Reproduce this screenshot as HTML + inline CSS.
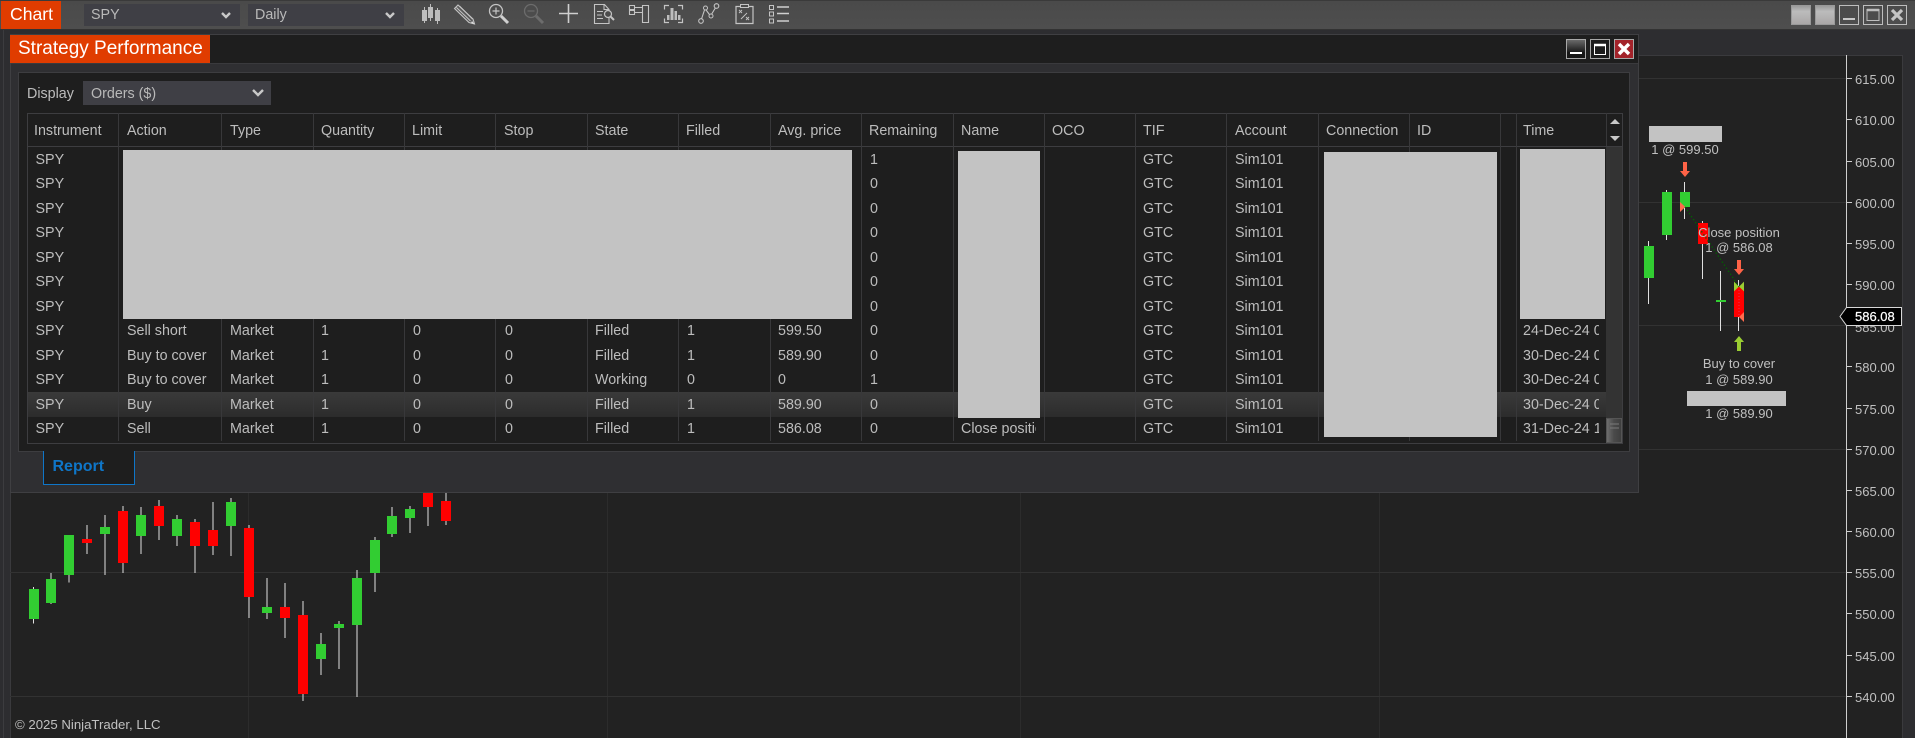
<!DOCTYPE html>
<html><head><meta charset="utf-8"><title>Strategy Performance</title>
<style>
html,body{margin:0;padding:0;width:1915px;height:738px;overflow:hidden;background:#2d2d30;font-family:"Liberation Sans",Arial,sans-serif}
div,span{position:absolute;box-sizing:border-box}
#tb{left:0;top:0;width:1915px;height:30px;background:linear-gradient(#4a4a4a,#4e4e4e);border-top:1px solid #3a3a3a;border-bottom:1px solid #333}
.org{background:#e03c00;color:#fff;white-space:nowrap}
.cb{background:#3f3f45;color:#b9b9b9;font-size:14.3px;line-height:24px;padding-left:7px}
svg{position:absolute;left:0;top:0}
#win{left:10px;top:34px;width:1629px;height:459px;background:#2f2f32;border:1px solid #3f3f42}
#hdr{left:0;top:0;width:1627px;height:29px;background:#1e1e1e;border-bottom:1px solid #3a3a3d}
#panel{left:18px;top:72px;width:1612px;height:380px;background:#1e1e1e;border:1px solid #3d3d40}
.t{font-size:14.3px;color:#bdbdbd;white-space:nowrap;line-height:20px}
.v{width:1px;top:113px;height:328px;background:#38383a}
.b{background:#c3c3c3}
.r{left:27px;width:1579px;height:24.45px}
.r span{top:3px;font-size:14.3px;color:#bdbdbd;white-space:nowrap;line-height:20px}
.a{left:8.5px}.c{left:100px}.d{left:203px}.e{left:294px}.f{left:386px}.g{left:478px}.h{left:568px}.i{left:660px}.j{left:751px}.k{left:843px}.l{left:934px}.m{left:1116px}.n{left:1208px}
.p{left:1496px;width:76px;overflow:hidden}
</style></head><body>

<!-- chart layer -->
<svg width="1915" height="738" viewBox="0 0 1915 738" style="top:0">
<rect x="10" y="55" width="1893" height="683" fill="#222222"/>
<rect x="10.5" y="55.5" width="1892" height="683" fill="none" stroke="#3a3a3d"/>
<rect x="3" y="30" width="1" height="708" fill="#3c3c3f"/>
<g shape-rendering="crispEdges">
<g fill="#2c2c2c"><rect x="248" y="55" width="1" height="683"/><rect x="607" y="55" width="1" height="683"/><rect x="1020" y="55" width="1" height="683"/><rect x="1379" y="55" width="1" height="683"/></g>
<g fill="#323232"><rect x="10" y="78" width="1837" height="1"/><rect x="10" y="202" width="1837" height="1"/><rect x="10" y="325" width="1837" height="1"/><rect x="10" y="449" width="1837" height="1"/><rect x="10" y="572" width="1837" height="1"/><rect x="10" y="696" width="1837" height="1"/></g>
<rect x="1846" y="55" width="1" height="683" fill="#cfcfcf"/>
<g fill="#cfcfcf"><rect x="1847" y="78" width="5" height="1"/><rect x="1847" y="119" width="5" height="1"/><rect x="1847" y="161" width="5" height="1"/><rect x="1847" y="202" width="5" height="1"/><rect x="1847" y="243" width="5" height="1"/><rect x="1847" y="284" width="5" height="1"/><rect x="1847" y="325" width="5" height="1"/><rect x="1847" y="366" width="5" height="1"/><rect x="1847" y="408" width="5" height="1"/><rect x="1847" y="449" width="5" height="1"/><rect x="1847" y="490" width="5" height="1"/><rect x="1847" y="531" width="5" height="1"/><rect x="1847" y="572" width="5" height="1"/><rect x="1847" y="613" width="5" height="1"/><rect x="1847" y="655" width="5" height="1"/><rect x="1847" y="696" width="5" height="1"/></g>
</g>
<g font-family="'Liberation Sans',Arial,sans-serif" font-size="13" fill="#c0c0c0">
<text x="1855" y="84">615.00</text><text x="1855" y="125">610.00</text><text x="1855" y="167">605.00</text><text x="1855" y="208">600.00</text><text x="1855" y="249">595.00</text><text x="1855" y="290">590.00</text><text x="1855" y="332">585.00</text><text x="1855" y="372">580.00</text><text x="1855" y="414">575.00</text><text x="1855" y="455">570.00</text><text x="1855" y="496">565.00</text><text x="1855" y="537">560.00</text><text x="1855" y="578">555.00</text><text x="1855" y="619">550.00</text><text x="1855" y="661">545.00</text><text x="1855" y="702">540.00</text>
</g>
<polygon points="1840,316.5 1846.5,307.5 1901.5,307.5 1901.5,325.5 1846.5,325.5" fill="#000" stroke="#d8d8d8"/>
<text x="1855" y="321" font-family="'Liberation Sans',Arial,sans-serif" font-size="13" fill="#fff" stroke="#fff" stroke-width=".2">586.08</text>

<!-- left candles: zoom units -->
<g transform="translate(0,470) scale(.33333)" shape-rendering="crispEdges">
<g fill="#e0e0e0">
<rect x="99" y="351" width="3" height="110"/><rect x="151" y="309" width="3" height="93"/><rect x="205" y="195" width="3" height="143"/><rect x="259" y="165" width="3" height="87"/><rect x="313" y="135" width="3" height="180"/><rect x="367" y="108" width="3" height="201"/><rect x="421" y="111" width="3" height="141"/><rect x="475" y="90" width="3" height="120"/><rect x="529" y="135" width="3" height="93"/><rect x="583" y="147" width="3" height="162"/><rect x="637" y="96" width="3" height="159"/><rect x="691" y="84" width="3" height="174"/><rect x="745" y="165" width="3" height="279"/><rect x="799" y="324" width="3" height="123"/><rect x="853" y="339" width="3" height="165"/><rect x="907" y="393" width="3" height="300"/><rect x="961" y="489" width="3" height="126"/><rect x="1015" y="453" width="3" height="144"/><rect x="1069" y="300" width="3" height="381"/><rect x="1123" y="201" width="3" height="165"/><rect x="1174" y="111" width="3" height="90"/><rect x="1228" y="108" width="3" height="81"/><rect x="1282" y="66" width="3" height="102"/><rect x="1336" y="66" width="3" height="99"/>
</g>
<g fill="#32cd32">
<rect x="87" y="357" width="30" height="90"/><rect x="138" y="327" width="30" height="72"/><rect x="192" y="195" width="30" height="120"/><rect x="300" y="171" width="30" height="21"/><rect x="408" y="135" width="30" height="63"/><rect x="516" y="147" width="30" height="51"/><rect x="678" y="96" width="30" height="72"/><rect x="786" y="411" width="30" height="18"/><rect x="948" y="522" width="30" height="45"/><rect x="1002" y="462" width="30" height="12"/><rect x="1056" y="324" width="30" height="141"/><rect x="1110" y="210" width="30" height="99"/><rect x="1161" y="138" width="30" height="54"/><rect x="1215" y="117" width="30" height="27"/>
</g>
<g fill="#ff0000">
<rect x="246" y="207" width="30" height="12"/><rect x="354" y="123" width="30" height="156"/><rect x="462" y="108" width="30" height="60"/><rect x="570" y="156" width="30" height="72"/><rect x="624" y="180" width="30" height="48"/><rect x="732" y="174" width="30" height="207"/><rect x="840" y="411" width="30" height="33"/><rect x="894" y="435" width="30" height="237"/><rect x="1269" y="66" width="30" height="45"/><rect x="1323" y="93" width="30" height="60"/>
</g>
</g>

<!-- right candles: zoom units -->
<g transform="translate(1500,180) scale(.33333)">
<g shape-rendering="crispEdges">
<g fill="#e0e0e0"><rect x="444" y="183" width="3" height="189"/><rect x="498" y="30" width="3" height="150"/><rect x="552" y="6" width="3" height="111"/><rect x="606" y="123" width="3" height="174"/><rect x="660" y="273" width="3" height="180"/><rect x="714" y="300" width="3" height="153"/></g>
<g fill="#32cd32"><rect x="432" y="198" width="30" height="96"/><rect x="486" y="36" width="30" height="129"/><rect x="540" y="36" width="30" height="45"/><rect x="648" y="360" width="30" height="6"/></g>
<g fill="#ff0000"><rect x="594" y="129" width="30" height="63"/><rect x="702" y="320" width="30" height="91"/></g>
</g>
<polygon points="540,66 556,81 540,96" fill="#ff6a4d"/>
<polygon points="702,305 717,320 702,334" fill="#9acd32"/>
<polygon points="732,305 717,320 732,334" fill="#9acd32"/>
<polygon points="732,396 717,411 732,426" fill="#ff6a4d"/>
<line x1="555" y1="81" x2="717" y2="320" stroke="#006400" stroke-width="4" stroke-dasharray="4 7"/>
<line x1="717" y1="330" x2="717" y2="408" stroke="#e0305a" stroke-width="3" stroke-dasharray="3 6"/>
<polygon points="711,240 723,240 723,267 732,267 717,285 702,267 711,267" fill="#ff6347"/>
<polygon points="711,513 723,513 723,486 732,486 717,468 702,486 711,486" fill="#9acd32"/>
</g>
<polygon points="1683,162 1687,162 1687,171 1690,171 1685,177 1680,171 1683,171" fill="#ff6347"/>
<rect x="1649" y="126" width="73" height="16" fill="#c3c3c3"/>
<rect x="1687" y="391" width="99" height="15" fill="#c3c3c3"/>
<g font-family="'Liberation Sans',Arial,sans-serif" font-size="13" fill="#c0c0c0" text-anchor="middle">
<text x="1685" y="154">1 @ 599.50</text>
<text x="1739" y="237">Close position</text>
<text x="1739" y="252">1 @ 586.08</text>
<text x="1739" y="368">Buy to cover</text>
<text x="1739" y="384">1 @ 589.90</text>
<text x="1739" y="418">1 @ 589.90</text>
</g>
<text x="15" y="729" font-family="'Liberation Sans',Arial,sans-serif" font-size="13.2" fill="#c0c0c0">© 2025 NinjaTrader, LLC</text>
</svg>

<!-- toolbar -->
<div id="tb"></div>
<div class="org" style="left:1px;top:1px;width:60px;height:28px;font-size:17.6px;line-height:27px;padding-left:9px">Chart</div>
<div class="cb" style="left:84px;top:4px;width:156px;height:22px;line-height:22px">SPY</div>
<div class="cb" style="left:248px;top:4px;width:156px;height:22px;line-height:22px">Daily</div>

<svg width="1915" height="30" viewBox="0 0 1915 30" fill="none" stroke="#c4c4c4">
<path d="M222 13l4 4 4-4M386 13l4 4 4-4" stroke="#c8c8c8" stroke-width="2.4"/>
<!-- candles -->
<g fill="#bdbdbd" stroke="none"><rect x="422" y="10" width="5" height="11"/><rect x="424" y="7" width="1" height="16"/><rect x="428" y="7" width="5" height="11"/><rect x="430" y="4" width="1" height="17"/><rect x="435" y="10" width="5" height="11"/><rect x="437" y="8" width="1" height="16"/></g>
<!-- pencil -->
<path d="M458 5l15 14 1.500 5-5.500-1.500-14.500-14z" stroke-width="1.100" fill="#5a5a5a"/><path d="M456.500 7.500l14 13.500M459.500 6l13 13" stroke="#c8c8c8" stroke-width=".9"/><path d="M472 21l2.500 3-3.500-1z" fill="#ddd" stroke="none"/>
<!-- zoom in -->
<circle cx="496" cy="11" r="6.500" stroke-width="1.300"/><path d="M492.500 11h7M496 7.500v7" stroke-width="1.200"/><path d="M501 16l7 7" stroke="#d0d0d0" stroke-width="3"/>
<!-- zoom out -->
<g stroke="#6c6c6c"><circle cx="531" cy="11" r="6.500" stroke-width="1.300"/><path d="M527.500 11h7" stroke-width="1.200"/><path d="M536 16l7 7" stroke-width="3"/></g>
<!-- crosshair -->
<path d="M559 13.500h19M568.500 4v19" stroke="#cfcfcf" stroke-width="1.600"/>
<!-- doc search -->
<path d="M594.500 4.500h10l4.500 5V23.500H594.500z" stroke-width="1.100"/><path d="M604 4.500v5h5" stroke-width="1"/><path d="M597 11.500h6M597 15h5M597 18.500h6" stroke-width=".9"/><circle cx="608" cy="14" r="3.500" fill="#4c4c4c" stroke-width="1.200"/><path d="M610.500 16.500l3.500 3.500" stroke-width="2"/>
<!-- panels -->
<path d="M629.500 5.500h5v4h-5zM629.500 10.500h5v4h-5zM642.500 5.500h6v17h-6z" stroke-width="1.100"/><path d="M634 7.500h8M634 12.500h8" stroke-width="1.100"/>
<!-- data box -->
<path d="M669 5.500h-4.500v4M678 5.500h4.500v4M669 22.500h-4.500v-4M678 22.500h4.500v-4" stroke-width="1.200"/><g fill="#bdbdbd" stroke="none"><rect x="667" y="15" width="2.500" height="5"/><rect x="670.500" y="8" width="3" height="12"/><rect x="674.500" y="11" width="2.500" height="9"/><rect x="678" y="15" width="2.500" height="5"/></g>
<!-- drawing path -->
<path d="M701 20.500L705 8.500 710.500 16 716.500 6" stroke-width="1.100"/><circle cx="701" cy="21" r="2.300" fill="#4c4c4c" stroke-width="1.100"/><circle cx="705.500" cy="8" r="2" fill="#4c4c4c" stroke-width="1"/><circle cx="711" cy="16" r="2" fill="#4c4c4c" stroke-width="1"/><circle cx="716.500" cy="6" r="2.300" fill="#4c4c4c" stroke-width="1.100"/>
<!-- strategy clipboard -->
<path d="M736 6.500h17v17h-17z" stroke-width="1.200"/><rect x="740.500" y="4.500" width="8" height="3" fill="#4c4c4c" stroke-width="1"/><path d="M739 10l3 3M742 10l-3 3M746 17l3 3M749 17l-3 3M741 19l6-6" stroke-width=".9"/>
<!-- list -->
<path d="M769.500 5.500h4v4h-4zM769.500 12h4v4h-4zM769.500 19h4v4h-4z" stroke-width="1"/><path d="M777 7h12M777 13.500h12M777 21h12" stroke="#cfcfcf" stroke-width="1.400"/>
</svg>

<!-- window buttons top-right -->
<div style="left:1791px;top:5px;width:20px;height:20px;background:linear-gradient(#9a9a9a,#bcbcbc 30%,#aaa7a7);border:1px solid #999"></div>
<div style="left:1815px;top:5px;width:20px;height:20px;background:linear-gradient(#9a9a9a,#bcbcbc 30%,#aaa7a7);border:1px solid #999"></div>
<svg width="1915" height="30" viewBox="0 0 1915 30" fill="none" stroke="#bdbdbd">
<rect x="1839.500" y="5.500" width="19" height="19"/><path d="M1843 19h12" stroke="#c8c8c8" stroke-width="2"/>
<rect x="1863.500" y="5.500" width="19" height="19"/><rect x="1867" y="9.500" width="12" height="11"/><path d="M1867 10h12" stroke-width="2.500"/>
<rect x="1887.500" y="5.500" width="19" height="19"/><path d="M1892 10l10 10M1902 10l-10 10" stroke="#c4c4c4" stroke-width="3.200"/>
</svg>

<!-- strategy window -->
<div id="win"><div id="hdr"></div></div>
<div class="org" style="left:10px;top:35px;width:200px;height:28px;font-size:19px;line-height:28px;padding-left:8px">Strategy Performance</div>
<div style="left:1566px;top:39px;width:20px;height:20px;background:linear-gradient(#6a6a6a,#161616 70%);border:1px solid #a8a8a8"></div>
<div style="left:1590px;top:39px;width:20px;height:20px;background:#1c1c1c;border:1px solid #a8a8a8"></div>
<div style="left:1614px;top:39px;width:20px;height:20px;background:#a3232a;border:1px solid #a8a8a8"></div>
<svg width="1915" height="70" viewBox="0 0 1915 70" fill="none" stroke="#fff" style="z-index:2">
<path d="M1570 53h12" stroke-width="2"/>
<rect x="1594.500" y="44.500" width="11" height="10" stroke-width="1"/><path d="M1594 45h12" stroke-width="2.500"/>
<path d="M1619 44l10 10M1629 44l-10 10" stroke-width="3.400"/>
</svg>

<div id="panel"></div>
<div class="t" style="left:27px;top:84px">Display</div>
<div class="cb" style="left:83px;top:81px;width:188px;height:24px;padding-top:1px;padding-left:8px">Orders ($)</div>
<svg width="280" height="110" viewBox="0 0 280 110" fill="none" style="z-index:2"><path d="M253 90l5 5 5-5" stroke="#c8c8c8" stroke-width="2.400"/></svg>

<!-- table frame -->
<div style="left:27px;top:113px;width:1596px;height:331px;border:1px solid #3d3d40"></div>
<div style="left:28px;top:146px;width:1594px;height:1px;background:#3d3d40"></div>
<!-- highlight -->
<div style="left:28px;top:392px;width:1578px;height:25px;background:linear-gradient(#3a3a3a,#2c2c2c)"></div>
<!-- scroll -->
<div style="left:1606px;top:147px;width:16px;height:296px;background:#333"></div>
<div style="left:1606px;top:418px;width:16px;height:25px;background:linear-gradient(90deg,#6d6d6d,#4a4a4a 50%,#3f3f3f);border:1px solid #555"></div>
<svg width="1915" height="450" viewBox="0 0 1915 450" style="z-index:1"><polygon points="1610,124 1620,124 1615,119" fill="#c8c8c8"/><polygon points="1610,136 1620,136 1615,141" fill="#c8c8c8"/><path d="M1610 424h9M1610 428h9" stroke="#7a7a7a"/></svg>
<!-- column lines -->
<div class="v" style="left:118px"></div><div class="v" style="left:221px"></div><div class="v" style="left:313px"></div><div class="v" style="left:404px"></div><div class="v" style="left:495px"></div><div class="v" style="left:587px"></div><div class="v" style="left:678px"></div><div class="v" style="left:770px"></div><div class="v" style="left:861px"></div><div class="v" style="left:953px"></div><div class="v" style="left:1044px"></div><div class="v" style="left:1135px"></div><div class="v" style="left:1226px"></div><div class="v" style="left:1318px"></div><div class="v" style="left:1409px"></div><div class="v" style="left:1500px"></div><div class="v" style="left:1516px"></div><div class="v" style="left:1606px;height:33px"></div>
<!-- header -->
<div class="t" style="left:34px;top:121px">Instrument</div><div class="t" style="left:127px;top:121px">Action</div><div class="t" style="left:230px;top:121px">Type</div><div class="t" style="left:321px;top:121px">Quantity</div><div class="t" style="left:412px;top:121px">Limit</div><div class="t" style="left:504px;top:121px">Stop</div><div class="t" style="left:595px;top:121px">State</div><div class="t" style="left:686px;top:121px">Filled</div><div class="t" style="left:778px;top:121px">Avg. price</div><div class="t" style="left:869px;top:121px">Remaining</div><div class="t" style="left:961px;top:121px">Name</div><div class="t" style="left:1052px;top:121px">OCO</div><div class="t" style="left:1143px;top:121px">TIF</div><div class="t" style="left:1235px;top:121px">Account</div><div class="t" style="left:1326px;top:121px">Connection</div><div class="t" style="left:1417px;top:121px">ID</div><div class="t" style="left:1523px;top:121px">Time</div>

<!-- rows -->
<div class="r" style="top:147px"><span class="a">SPY</span><span class="k">1</span><span class="m">GTC</span><span class="n">Sim101</span></div>
<div class="r" style="top:171.450px"><span class="a">SPY</span><span class="k">0</span><span class="m">GTC</span><span class="n">Sim101</span></div>
<div class="r" style="top:195.900px"><span class="a">SPY</span><span class="k">0</span><span class="m">GTC</span><span class="n">Sim101</span></div>
<div class="r" style="top:220.350px"><span class="a">SPY</span><span class="k">0</span><span class="m">GTC</span><span class="n">Sim101</span></div>
<div class="r" style="top:244.800px"><span class="a">SPY</span><span class="k">0</span><span class="m">GTC</span><span class="n">Sim101</span></div>
<div class="r" style="top:269.250px"><span class="a">SPY</span><span class="k">0</span><span class="m">GTC</span><span class="n">Sim101</span></div>
<div class="r" style="top:293.700px"><span class="a">SPY</span><span class="k">0</span><span class="m">GTC</span><span class="n">Sim101</span></div>
<div class="r" style="top:318.150px"><span class="a">SPY</span><span class="c">Sell short</span><span class="d">Market</span><span class="e">1</span><span class="f">0</span><span class="g">0</span><span class="h">Filled</span><span class="i">1</span><span class="j">599.50</span><span class="k">0</span><span class="m">GTC</span><span class="n">Sim101</span><span class="p">24-Dec-24 08:30</span></div>
<div class="r" style="top:342.600px"><span class="a">SPY</span><span class="c">Buy to cover</span><span class="d">Market</span><span class="e">1</span><span class="f">0</span><span class="g">0</span><span class="h">Filled</span><span class="i">1</span><span class="j">589.90</span><span class="k">0</span><span class="m">GTC</span><span class="n">Sim101</span><span class="p">30-Dec-24 08:30</span></div>
<div class="r" style="top:367.050px"><span class="a">SPY</span><span class="c">Buy to cover</span><span class="d">Market</span><span class="e">1</span><span class="f">0</span><span class="g">0</span><span class="h">Working</span><span class="i">0</span><span class="j">0</span><span class="k">1</span><span class="m">GTC</span><span class="n">Sim101</span><span class="p">30-Dec-24 08:30</span></div>
<div class="r" style="top:391.500px"><span class="a">SPY</span><span class="c">Buy</span><span class="d">Market</span><span class="e">1</span><span class="f">0</span><span class="g">0</span><span class="h">Filled</span><span class="i">1</span><span class="j">589.90</span><span class="k">0</span><span class="m">GTC</span><span class="n">Sim101</span><span class="p">30-Dec-24 08:30</span></div>
<div class="r" style="top:415.950px"><span class="a">SPY</span><span class="c">Sell</span><span class="d">Market</span><span class="e">1</span><span class="f">0</span><span class="g">0</span><span class="h">Filled</span><span class="i">1</span><span class="j">586.08</span><span class="k">0</span><span class="l" style="width:75px;overflow:hidden">Close position</span><span class="m">GTC</span><span class="n">Sim101</span><span class="p">31-Dec-24 15:00</span></div>

<!-- redaction blocks -->
<div class="b" style="left:123px;top:150px;width:729px;height:169px"></div>
<div class="b" style="left:958px;top:151px;width:82px;height:267px"></div>
<div class="b" style="left:1324px;top:152px;width:173px;height:285px"></div>
<div class="b" style="left:1520px;top:149px;width:85px;height:170px"></div>

<!-- report tab -->
<div style="left:43px;top:451px;width:92px;height:34px;background:#1e1e1e;border:1px solid #0f76c8;border-top:none;color:#0f76c8;font-weight:bold;font-size:16px;line-height:32px;padding-left:8.500px">Report</div>
</body></html>
